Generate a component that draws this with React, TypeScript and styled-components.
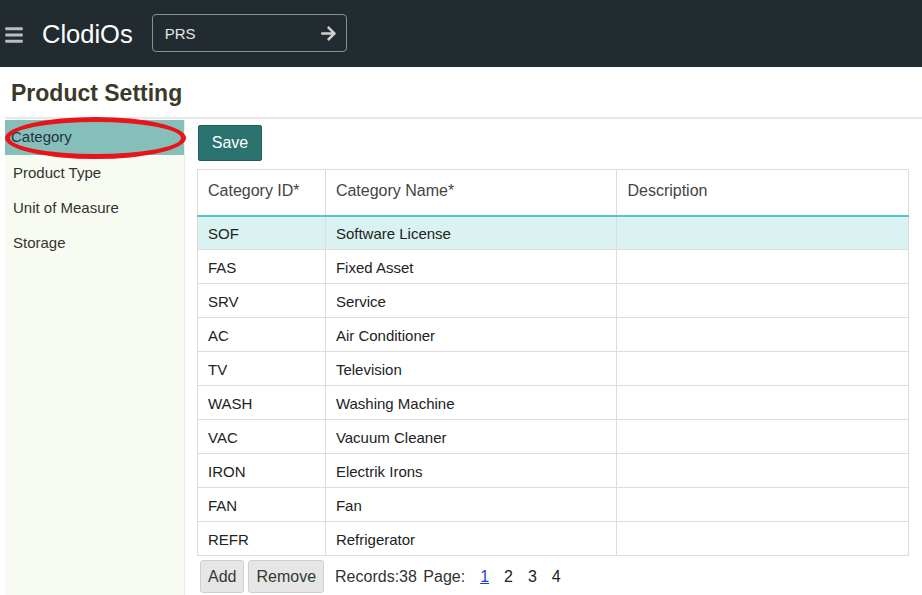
import React from "react";
import styled, { createGlobalStyle } from "styled-components";
import { FaBars, FaArrowRight } from "react-icons/fa";

const Global = createGlobalStyle`
  html, body { margin: 0; padding: 0; background: #fff; }
  body { font-family: "Liberation Sans", Arial, sans-serif; color: #333; }
  * { box-sizing: border-box; }
`;

const Page = styled.div`
  width: 922px;
  height: 595px;
  overflow: hidden;
  display: flex;
  flex-direction: column;
`;

const TopBar = styled.header`
  height: 67px;
  background: #222b30;
  display: flex;
  align-items: center;
  padding-left: 4px;
`;

const Burger = styled.div`
  color: #bdbdbd;
  display: flex;
  align-items: center;
  width: 21px;
  margin-top: 2px;
`;

const Brand = styled.div`
  color: #fff;
  font-size: 25.5px;
  margin-left: 17px;
  margin-top: 1px;
`;

const SearchBox = styled.div`
  margin-left: 19px;
  width: 195px;
  height: 38px;
  border: 1px solid #8a8f92;
  border-radius: 4px;
  display: flex;
  align-items: center;
  justify-content: space-between;
  padding: 0 9px 0 12px;
  color: #e6e6e6;
  font-size: 15px;
  margin-top: -1px;
`;

const ArrowWrap = styled.span`
  color: #cfcfcf;
  display: flex;
  align-items: center;
`;

const TitleBar = styled.div`
  height: 52px;
  margin-left: 5px;
  border-bottom: 2px solid #e8e8e8;
  display: flex;
  align-items: center;
  padding-left: 6px;
  padding-top: 3px;
`;

const Title = styled.h1`
  margin: 0;
  font-size: 23px;
  font-weight: bold;
  color: #3b3a28;
`;

const Body = styled.div`
  flex: 1;
  display: flex;
  margin-left: 5px;
`;

const Sidebar = styled.nav`
  position: relative;
  width: 180px;
  background: #f8fbf1;
  border-right: 1px solid #eceee6;
  padding-top: 1px;
`;

const NavItem = styled.div<{ $active?: boolean }>`
  height: 35px;
  display: flex;
  align-items: center;
  padding-left: ${(p) => (p.$active ? "6px" : "8px")};
  font-size: 15px;
  color: ${(p) => (p.$active ? "#234" : "#333")};
  background: ${(p) => (p.$active ? "#85bfba" : "transparent")};
  padding-bottom: ${(p) => (p.$active ? "2px" : "0")};
`;

const Highlight = styled.div`
  position: absolute;
  left: 0px;
  top: -2px;
  width: 181px;
  height: 42px;
  border: 5px solid #e8141c;
  border-radius: 50%;
  pointer-events: none;
`;

const Content = styled.main`
  flex: 1;
  padding: 6px 0 0 12px;
  display: flex;
  flex-direction: column;
  align-items: flex-start;
`;

const SaveButton = styled.button`
  width: 64px;
  height: 36px;
  background: #2a7370;
  color: #fff;
  border: 1px solid #1f5e5b;
  border-radius: 2px;
  font-family: inherit;
  font-size: 16px;
  margin-left: 1px;
`;

const Table = styled.table`
  margin-top: 8px;
  width: 712px;
  border-collapse: collapse;
  border: 1px solid #dcdcdc;
`;

const Th = styled.th<{ $w: number }>`
  width: ${(p) => p.$w}px;
  height: 46px;
  text-align: left;
  font-weight: normal;
  font-size: 16px;
  color: #444;
  padding: 0 10px;
  border-right: 1px solid #dcdcdc;
  border-bottom: 2px solid #55c8c0;
  padding-bottom: 2px;
`;

const Tr = styled.tr<{ $sel?: boolean }>`
  background: ${(p) => (p.$sel ? "#daf2f2" : "#fff")};
`;

const Td = styled.td`
  height: 34px;
  padding: 0 10px;
  padding-top: 2px;
  font-size: 15px;
  color: #222;
  border-right: 1px solid #dcdcdc;
  border-bottom: 1px solid #dcdcdc;
`;

const Footer = styled.div`
  display: flex;
  align-items: center;
  margin-top: 4px;
  margin-left: 3px;
  gap: 4px;
`;

const GrayButton = styled.button`
  height: 33px;
  padding: 0 7px;
  background: #e6e6e6;
  border: 1px solid #cfcfcf;
  border-radius: 3px;
  font-family: inherit;
  font-size: 16px;
  color: #2f3b2f;
`;

const Info = styled.span`
  margin-left: 7px;
  font-size: 16px;
  color: #333;
  word-spacing: 2px;
`;

const PageNum = styled.span<{ $current?: boolean }>`
  font-size: 16px;
  margin-left: 11px;
  color: ${(p) => (p.$current ? "#1a3fd6" : "#222")};
  text-decoration: ${(p) => (p.$current ? "underline" : "none")};
`;

const rows = [
  ["SOF", "Software License"],
  ["FAS", "Fixed Asset"],
  ["SRV", "Service"],
  ["AC", "Air Conditioner"],
  ["TV", "Television"],
  ["WASH", "Washing Machine"],
  ["VAC", "Vacuum Cleaner"],
  ["IRON", "Electrik Irons"],
  ["FAN", "Fan"],
  ["REFR", "Refrigerator"],
];

export default function App() {
  return (
    <Page>
      <Global />
      <TopBar>
        <Burger>
          <FaBars size={20} />
        </Burger>
        <Brand>ClodiOs</Brand>
        <SearchBox>
          <span>PRS</span>
          <ArrowWrap>
            <FaArrowRight size={17} />
          </ArrowWrap>
        </SearchBox>
      </TopBar>
      <TitleBar>
        <Title>Product Setting</Title>
      </TitleBar>
      <Body>
        <Sidebar>
          <NavItem $active>Category</NavItem>
          <NavItem>Product Type</NavItem>
          <NavItem>Unit of Measure</NavItem>
          <NavItem>Storage</NavItem>
          <Highlight />
        </Sidebar>
        <Content>
          <SaveButton>Save</SaveButton>
          <Table>
            <thead>
              <tr>
                <Th $w={128}>Category ID*</Th>
                <Th $w={292}>Category Name*</Th>
                <Th $w={292}>Description</Th>
              </tr>
            </thead>
            <tbody>
              {rows.map(([id, name], i) => (
                <Tr key={id} $sel={i === 0}>
                  <Td>{id}</Td>
                  <Td>{name}</Td>
                  <Td></Td>
                </Tr>
              ))}
            </tbody>
          </Table>
          <Footer>
            <GrayButton>Add</GrayButton>
            <GrayButton>Remove</GrayButton>
            <Info>Records:38 Page:</Info>
            <PageNum $current>1</PageNum>
            <PageNum>2</PageNum>
            <PageNum>3</PageNum>
            <PageNum>4</PageNum>
          </Footer>
        </Content>
      </Body>
    </Page>
  );
}
